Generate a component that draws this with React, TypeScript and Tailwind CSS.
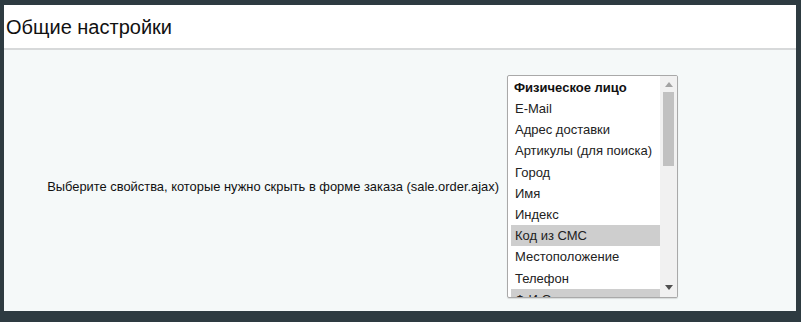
const items = [
  { label: 'E-Mail', selected: false },
  { label: 'Адрес доставки', selected: false },
  { label: 'Артикулы (для поиска)', selected: false },
  { label: 'Город', selected: false },
  { label: 'Имя', selected: false },
  { label: 'Индекс', selected: false },
  { label: 'Код из СМС', selected: true },
  { label: 'Местоположение', selected: false },
  { label: 'Телефон', selected: false },
  { label: 'Ф.И.О.', selected: true },
];

const PropsSelect = () => (
  <div className="relative flex h-[223px] w-[171px] overflow-hidden rounded-[2px] border border-[#a9a9a9] bg-white shadow-[0_1px_1px_rgba(0,0,0,0.12)]">
    <div className="flex-1 pt-[1px] pl-[3px]">
      <div className="h-[21px] pl-[3px] text-[13px] font-bold leading-[21px] text-[#111]">Физическое лицо</div>
      {items.map((item) => (
        <div
          key={item.label}
          className={`h-[21.2px] pl-[4px] text-[13px] leading-[21px] text-[#222] ${
            item.selected ? 'bg-[#cecece]' : ''
          }`}
        >
          {item.label}
        </div>
      ))}
    </div>
    {/* scrollbar */}
    <div className="flex w-[17px] flex-col items-center bg-[#f1f1f1]">
      <div className="flex h-[14px] w-full items-center justify-center pt-[3px]">
        <svg width="8" height="5" viewBox="0 0 8 5">
          <path d="M0 5 L4 0 L8 5 Z" fill="#a3a3a3" />
        </svg>
      </div>
      <div className="mt-[2px] h-[74px] w-[11px] bg-[#c1c1c1]" />
      <div className="flex-1" />
      <div className="flex h-[16px] w-full items-center justify-center pb-[4px]">
        <svg width="8" height="5" viewBox="0 0 8 5">
          <path d="M0 0 L4 5 L8 0 Z" fill="#505050" />
        </svg>
      </div>
    </div>
  </div>
);

export default function App() {
  return (
    <div className="h-[322px] w-[801px] bg-[#2e3b41] pt-[5px] pr-[5px] pb-[11px] pl-[4px] font-['Liberation_Sans',Arial,sans-serif]">
      <div className="flex h-full flex-col bg-[#f5f9f9]">
        <div className="h-[45px] border-b-2 border-[#d7d9da] bg-white pl-[2px] pt-[10px] text-[20px] leading-[24px] text-[#111]">
          Общие настройки
        </div>
        <div className="flex items-center pt-[25px]">
          <div className="w-[499px] pr-[4px] text-right text-[12.9px] text-[#111]">
            Выберите свойства, которые нужно скрыть в форме заказа (sale.order.ajax)
          </div>
          <div className="pl-[4px]">
            <PropsSelect />
          </div>
        </div>
      </div>
    </div>
  );
}
